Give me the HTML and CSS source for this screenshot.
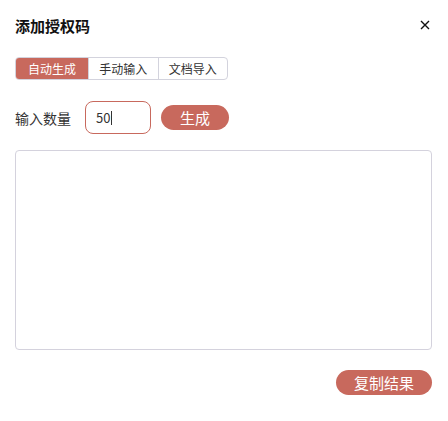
FILE: index.html
```html
<!DOCTYPE html>
<html lang="zh-CN">
<head>
    <meta charset="UTF-8">
    <title>添加授权码</title>
    <link rel="stylesheet" href="styles.css">
</head>
<body>
    <div class="dialog">
        <div class="header">
            <h1>添加授权码</h1>
            <svg class="close" width="10" height="10" viewBox="0 0 10 10">
                <path d="M1 1L9 9M9 1L1 9" stroke="#111" stroke-width="1.4" fill="none"/>
            </svg>
        </div>

        <div class="tabs">
            <span class="tab active">自动生成</span>
            <span class="tab">手动输入</span>
            <span class="tab">文档导入</span>
        </div>

        <div class="count-row">
            <label for="count">输入数量</label>
            <div class="count-input"><span>50</span><i class="caret"></i></div>
            <button class="btn">生成</button>
        </div>

        <div class="result"></div>

        <div class="footer">
            <button class="btn copy">复制结果</button>
        </div>
    </div>
</body>
</html>
```

FILE: styles.css
```css
body {
    margin: 0;
    background: white;
    font-family: "Noto Sans CJK SC", "Noto Sans", sans-serif;
    color: #333;
}
.dialog {
    padding: 12px 16px 0 15px;
}
.header {
    display: flex;
    justify-content: space-between;
    align-items: center;
    height: 26px;
}
h1 {
    margin: 0;
    font-size: 15px;
    font-weight: bold;
    color: #111;
}
.close {
    margin-right: 2px;
    margin-top: -1px;
}
.tabs {
    display: flex;
    width: 213px;
    height: 23px;
    margin-top: 19px;
    border: 1px solid #d3d3dd;
    border-radius: 4px;
    box-sizing: border-box;
    overflow: hidden;
}
.tab {
    flex: 1;
    display: flex;
    align-items: center;
    justify-content: center;
    font-size: 12px;
    color: #333;
    border-left: 1px solid #d3d3dd;
}
.tab:first-child {
    border-left: none;
    flex: 0 0 72px;
}
.tab.active {
    background: #c8695d;
    color: white;
}
.count-row {
    display: flex;
    align-items: center;
    margin-top: 21px;
    height: 33px;
}
.count-row label {
    font-size: 14px;
    color: #333;
    width: 70px;
}
.count-input {
    width: 66px;
    height: 33px;
    box-sizing: border-box;
    border: 1px solid #c8695d;
    border-radius: 8px;
    display: flex;
    align-items: center;
    padding-left: 10px;
    font-size: 13px;
    color: #333;
}
.caret {
    display: inline-block;
    width: 1px;
    height: 14px;
    background: #333;
    margin-left: 1px;
}
.btn {
    background: #c8695d;
    color: white;
    border: none;
    border-radius: 13px;
    height: 25px;
    font-family: inherit;
    font-size: 15px;
    padding: 0;
    cursor: pointer;
}
.count-row .btn {
    width: 68px;
    margin-left: 10px;
}
.result {
    margin-top: 16px;
    height: 200px;
    box-sizing: border-box;
    border: 1px solid #d4d2dd;
    border-radius: 4px;
}
.footer {
    display: flex;
    justify-content: flex-end;
    margin-top: 20px;
}
.copy {
    width: 96px;
}
```
